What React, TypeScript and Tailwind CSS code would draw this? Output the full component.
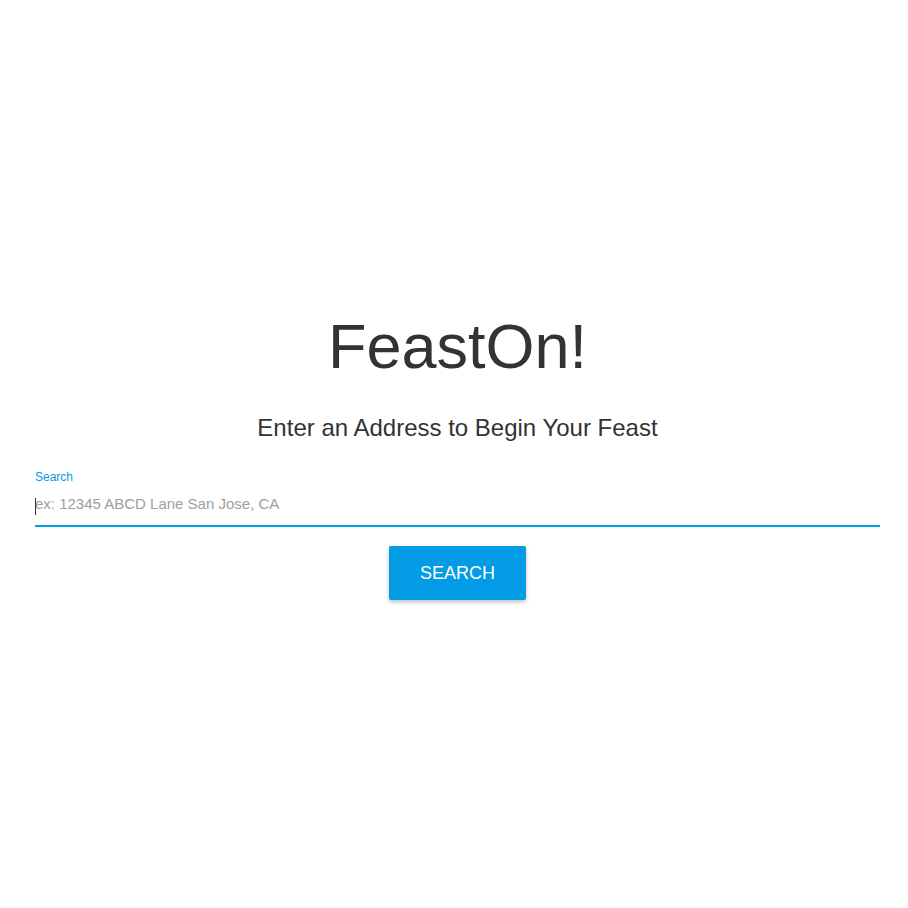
import React from "react";

export default function App() {
  return (
    <div
      className="min-h-[908px] w-full bg-white pl-[35px] pr-[28px] pt-[306px]"
      style={{ fontFamily: '"Liberation Sans", Arial, sans-serif' }}
    >
      <h1 className="text-center text-[63px] leading-[80px] text-[#333333]">FeastOn!</h1>
      <p className="mt-[28px] text-center text-[24px] leading-[28px] text-[#333333]">
        Enter an Address to Begin Your Feast
      </p>
      <div className="mt-[28px]">
        <label className="block text-[12px] leading-[14px] text-[#039be5]">Search</label>
        <div className="relative mt-[6px]">
          <input
            className="block h-[37px] w-full border-b-2 border-[#039be5] bg-transparent pb-[8px] text-[15px] text-[#333] outline-none placeholder:text-[#9e9e9e]"
            placeholder="ex: 12345 ABCD Lane San Jose, CA"
          />
          <span className="pointer-events-none absolute left-0 top-[8px] h-[17px] w-px bg-[#333]" />
        </div>
      </div>
      <div className="mt-[19px] flex justify-center">
        <button className="h-[54px] w-[137px] rounded-[2px] bg-[#039be5] text-[18px] text-white shadow-[0_2px_4px_rgba(0,0,0,0.25)]">
          SEARCH
        </button>
      </div>
    </div>
  );
}
